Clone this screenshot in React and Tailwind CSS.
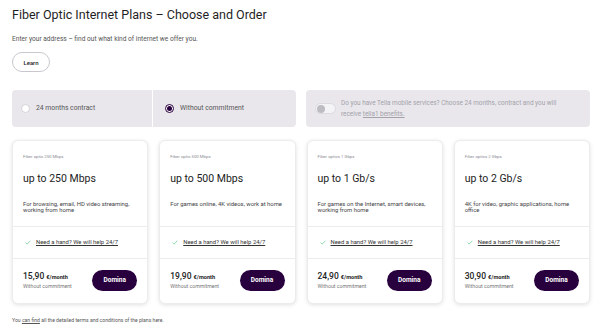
const PLANS = [
  {
    label: 'Fiber optic 250 Mbps',
    title: 'up to 250 Mbps',
    desc: 'For browsing, email, HD video streaming, working from home',
    price: '15,90',
  },
  {
    label: 'Fiber optic 500 Mbps',
    title: 'up to 500 Mbps',
    desc: 'For games online, 4K videos, work at home',
    price: '19,90',
  },
  {
    label: 'Fiber optics 1 Gbps',
    title: 'up to 1 Gb/s',
    desc: 'For games on the Internet, smart devices, working from home',
    price: '24,90',
  },
  {
    label: 'Fiber optics 2 Gbps',
    title: 'up to 2 Gb/s',
    desc: '4K for video, graphic applications, home office',
    price: '30,90',
  },
]

function Radio({ checked }) {
  return (
    <span
      className={`flex h-[9px] w-[9px] shrink-0 items-center justify-center rounded-full border bg-white ${
        checked ? 'border-[#29003e]' : 'border-[#d4d2d8]'
      }`}
    >
      {checked && <span className="h-[5px] w-[5px] rounded-full bg-[#29003e]" />}
    </span>
  )
}

function PlanCard({ plan }) {
  return (
    <div className="flex flex-col rounded-[6px] border border-[#ececef] bg-white shadow-[0_1px_4px_rgba(0,0,0,0.12)]">
      <div className="h-[85px] px-[10px] pt-[13px]">
        <p className="text-[4.3px] leading-[6px] text-[#8a8a93]">{plan.label}</p>
        <p className="mt-[12px] text-[10.5px] leading-[14px] text-[#1c1c1c]">{plan.title}</p>
        <p className="mt-[15px] pr-[2px] text-[5.9px] leading-[6px] text-[#3f3f46]">{plan.desc}</p>
      </div>
      <div className="flex h-[32px] items-center gap-[5px] border-t border-[#ececef] px-[12px]">
        <svg width="6" height="5" viewBox="0 0 6 5" fill="none">
          <path d="M0.6 2.6 L2.2 4.1 L5.4 0.8" stroke="#5cc98a" strokeWidth="0.7" />
        </svg>
        <a className="text-[5.9px] text-[#333] underline">Need a hand? We will help 24/7</a>
      </div>
      <div className="flex h-[45px] items-center justify-between border-t border-[#ececef] pl-[10px] pr-[10px] pb-[1px]">
        <div className="leading-none">
          <p className="text-[8.5px] font-medium text-[#222]">
            {plan.price} <span className="text-[5.6px] font-bold">€/month</span>
          </p>
          <p className="mt-[3px] text-[5.2px] text-[#777]">Without commitment</p>
        </div>
        <button
          type="button"
          className="h-[21px] w-[45px] rounded-full bg-[#29003e] text-[6.5px] font-bold text-white"
        >
          Domina
        </button>
      </div>
    </div>
  )
}

export default function App() {
  return (
    <div className="min-h-[327px] bg-white pl-[12px] pr-[10px] pt-[6px] font-['Roboto',sans-serif] text-[#222]">
      <h1 className="text-[12.5px] leading-[18px] text-[#1f1f1f]">
        Fiber Optic Internet Plans – Choose and Order
      </h1>
      <p className="mt-[11px] text-[6.6px] leading-[8px] text-[#555]">
        Enter your address – find out what kind of internet we offer you.
      </p>
      <button
        type="button"
        className="mt-[9px] h-[20px] w-[38px] rounded-full border border-[#c9c7cd] bg-white text-[6px] font-medium text-[#222]"
      >
        Learn
      </button>

      <div className="mt-[18px] grid grid-cols-2 gap-[10px]">
        <div className="flex h-[37px] overflow-hidden rounded-[4px] bg-[#e9e7ec]">
          <div className="flex flex-1 items-center gap-[6px] border-r border-white pl-[9px]">
            <Radio checked={false} />
            <span className="text-[6.8px] text-[#555]">24 months contract</span>
          </div>
          <div className="flex flex-1 items-center gap-[6px] pl-[12px]">
            <Radio checked />
            <span className="text-[6.8px] text-[#555]">Without commitment</span>
          </div>
        </div>
        <div className="flex h-[37px] items-center gap-[5px] rounded-[4px] bg-[#e9e7ec] pl-[9px] pr-[16px]">
          <span className="flex h-[11px] w-[21px] shrink-0 items-center rounded-full border border-[#dcdadf] bg-[#f4f3f6] pl-[1px]">
            <span className="h-[8px] w-[8px] rounded-full bg-[#bdbcc2]" />
          </span>
          <p className="text-[6.4px] leading-[11px] text-[#a3a2aa]">
            Do you have Telia mobile services? Choose 24 months, contract and you will receive{' '}
            <span className="underline">telia1 benefits.</span>
          </p>
        </div>
      </div>

      <div className="mt-[13px] grid grid-cols-4 gap-[11px]">
        {PLANS.map((plan) => (
          <PlanCard key={plan.label} plan={plan} />
        ))}
      </div>

      <p className="mt-[13px] text-[5.1px] text-[#555]">
        You <span className="underline">can find</span> all the detailed terms and conditions of the plans here.
      </p>
    </div>
  )
}
